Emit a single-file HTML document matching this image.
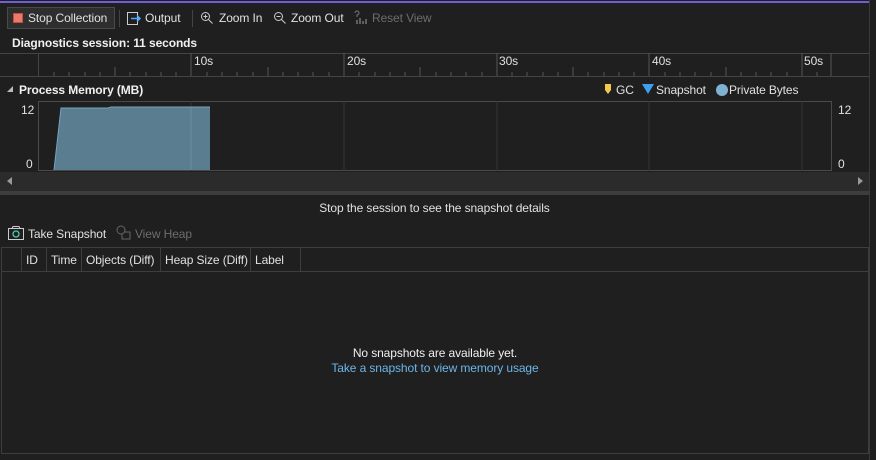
<!DOCTYPE html>
<html><head><meta charset="utf-8"><style>
*{margin:0;padding:0;box-sizing:border-box}
body{width:876px;height:460px;background:#1f1f1f;position:relative;overflow:hidden;font-family:"Liberation Sans",sans-serif;font-size:12px;color:#e0e0e0;letter-spacing:-0.1px}
.a{position:absolute;white-space:nowrap}
.l{position:absolute;background:#3e3e3e}
.dim{color:#6d6d6d}
b{font-weight:bold}
</style></head><body>
<div class="a" style="left:0;top:1px;width:869px;height:2px;background:#6e5fd6"></div>
<div class="l" style="left:869px;top:0;width:1px;height:460px;background:#3a3a3a"></div>
<!-- toolbar -->
<div class="a" style="left:7px;top:7px;width:108px;height:22px;background:#2e2e2e;border:1px solid #4a4a4a"></div>
<div class="a" style="left:13px;top:13px;width:10px;height:10px;background:#f0786a;border:1px solid #c05040"></div>
<div class="a" style="left:28px;top:11px">Stop Collection</div>
<div class="l" style="left:119px;top:10px;width:1px;height:17px;background:#444"></div>
<svg class="a" style="left:126px;top:11px" width="16" height="15"><rect x="1.5" y="1.5" width="10" height="12" fill="none" stroke="#ccc"/><path d="M5 7.5h9M11 4.5l3 3-3 3" fill="none" stroke="#4aa8ff" stroke-width="1.5"/></svg>
<div class="a" style="left:145px;top:11px">Output</div>
<div class="l" style="left:192px;top:10px;width:1px;height:17px;background:#444"></div>
<svg class="a" style="left:200px;top:11px" width="14" height="14"><circle cx="5.5" cy="5.5" r="4" fill="none" stroke="#ccc"/><path d="M8.5 8.5l4 4M3.5 5.5h4M5.5 3.5v4" stroke="#ccc"/></svg>
<div class="a" style="left:219px;top:11px">Zoom In</div>
<svg class="a" style="left:273px;top:11px" width="14" height="14"><circle cx="5.5" cy="5.5" r="4" fill="none" stroke="#ccc"/><path d="M8.5 8.5l4 4M3.5 5.5h4" stroke="#ccc"/></svg>
<div class="a" style="left:291px;top:11px">Zoom Out</div>
<svg class="a" style="left:353px;top:10px" width="16" height="16"><path d="M2 3a2 2 0 1 1 2 2v2" fill="none" stroke="#777"/><path d="M4 14v-4M7 14v-6M10 14v-3M13 14v-5" stroke="#777" stroke-width="1.5"/></svg>
<div class="a dim" style="left:372px;top:11px">Reset View</div>
<div class="a" style="left:12px;top:36px;font-weight:bold;color:#f0f0f0">Diagnostics session: 11 seconds</div>
<!-- ruler -->
<div class="l" style="left:0;top:53px;width:869px;height:1px;background:#444"></div>
<div class="l" style="left:0;top:76px;width:869px;height:1px;background:#444"></div>
<div class="l" style="left:38px;top:53px;width:1px;height:23px;background:#444"></div>
<svg class="a" style="left:0;top:53px" width="869" height="24">
<g stroke="#555">
<path d="M191 0v23M344 0v23M497 0v23M649 0v23M802 0v23M831 0v23"/>
<path d="M54 19v4M69 19v4M85 19v4M100 19v4M130 19v4M146 19v4M161 19v4M176 19v4M207 19v4M222 19v4M237 19v4M253 19v4M283 19v4M298 19v4M313 19v4M329 19v4M359 19v4M375 19v4M390 19v4M405 19v4M436 19v4M451 19v4M466 19v4M482 19v4M512 19v4M527 19v4M543 19v4M558 19v4M588 19v4M604 19v4M619 19v4M634 19v4M665 19v4M680 19v4M695 19v4M711 19v4M741 19v4M756 19v4M771 19v4M787 19v4M817 19v4"/>
<path d="M115 14v9M268 14v9M420 14v9M573 14v9M726 14v9"/>
</g></svg>
<div class="a" style="left:194px;top:54px">10s</div>
<div class="a" style="left:347px;top:54px">20s</div>
<div class="a" style="left:499px;top:54px">30s</div>
<div class="a" style="left:652px;top:54px">40s</div>
<div class="a" style="left:804px;top:54px">50s</div>
<!-- memory -->
<svg class="a" style="left:7px;top:85px" width="8" height="8"><path d="M6 1v6H0z" fill="#bbb"/></svg>
<div class="a" style="left:19px;top:83px;font-weight:bold;color:#f0f0f0">Process Memory (MB)</div>
<svg class="a" style="left:604px;top:83px" width="8" height="12"><path d="M1 1h6v6l-3 4-3-4z" fill="#f2c94c"/></svg>
<div class="a" style="left:616px;top:83px">GC</div>
<svg class="a" style="left:642px;top:84px" width="12" height="10"><path d="M0 0h12L6 10z" fill="#3ea0f0"/></svg>
<div class="a" style="left:656px;top:83px">Snapshot</div>
<div class="a" style="left:716px;top:84px;width:12px;height:12px;border-radius:50%;background:#7fb2d0"></div>
<div class="a" style="left:729px;top:83px">Private Bytes</div>
<div class="a" style="left:38px;top:101px;width:794px;height:70px;border:1px solid #4a4a4a"></div>
<svg class="a" style="left:38px;top:101px" width="794" height="70">
<path d="M153 0v70M306 0v70M459 0v70M611 0v70M764 0v70" stroke="#363636"/>
<path d="M16 69L23 7H70L73 6H172V69Z" fill="#5a7d90"/>
<path d="M16 69L23 7H70L73 6H172" fill="none" stroke="#76a3bd"/>
<path d="M153 6v63" stroke="#6a8ea0"/>
</svg>
<div class="a" style="left:21px;top:103px">12</div>
<div class="a" style="left:26px;top:157px">0</div>
<div class="a" style="left:838px;top:103px">12</div>
<div class="a" style="left:838px;top:157px">0</div>
<!-- scrollbar -->
<div class="a" style="left:0;top:172px;width:869px;height:19px;background:#2b2b2b"></div>
<svg class="a" style="left:6px;top:176px" width="8" height="10"><path d="M6 1v8L1 5z" fill="#999"/></svg>
<svg class="a" style="left:857px;top:176px" width="8" height="10"><path d="M1 1v8l5-4z" fill="#999"/></svg>
<div class="a" style="left:0;top:191px;width:869px;height:4px;background:#3d3d3d"></div>
<div class="a" style="left:0;top:201px;width:869px;text-align:center">Stop the session to see the snapshot details</div>
<svg class="a" style="left:8px;top:226px" width="16" height="14"><rect x="0.5" y="2.5" width="15" height="11" fill="none" stroke="#ccc"/><path d="M4 2.5l1-2h6l1 2" fill="none" stroke="#ccc"/><circle cx="8" cy="8" r="3" fill="none" stroke="#4ec9b0" stroke-width="1.3"/></svg>
<div class="a" style="left:28px;top:227px">Take Snapshot</div>
<svg class="a" style="left:116px;top:225px" width="16" height="16"><circle cx="5" cy="5" r="4" fill="none" stroke="#666"/><path d="M8 7h6v7H6v-5" fill="none" stroke="#666"/></svg>
<div class="a dim" style="left:135px;top:227px">View Heap</div>
<!-- table -->
<div class="a" style="left:1px;top:247px;width:868px;height:207px;border:1px solid #3e3e3e"></div>
<div class="l" style="left:1px;top:271px;width:868px;height:1px"></div>
<div class="l" style="left:21px;top:247px;width:1px;height:24px"></div>
<div class="l" style="left:46px;top:247px;width:1px;height:24px"></div>
<div class="l" style="left:81px;top:247px;width:1px;height:24px"></div>
<div class="l" style="left:160px;top:247px;width:1px;height:24px"></div>
<div class="l" style="left:250px;top:247px;width:1px;height:24px"></div>
<div class="l" style="left:300px;top:247px;width:1px;height:24px"></div>
<div class="a" style="left:26px;top:253px">ID</div>
<div class="a" style="left:51px;top:253px">Time</div>
<div class="a" style="left:86px;top:253px">Objects (Diff)</div>
<div class="a" style="left:165px;top:253px">Heap Size (Diff)</div>
<div class="a" style="left:255px;top:253px">Label</div>
<div class="a" style="left:0;top:346px;width:870px;text-align:center;color:#f0f0f0">No snapshots are available yet.</div>
<div class="a" style="left:0;top:361px;width:870px;text-align:center;color:#6cb6e8">Take a snapshot to view memory usage</div>
</body></html>
